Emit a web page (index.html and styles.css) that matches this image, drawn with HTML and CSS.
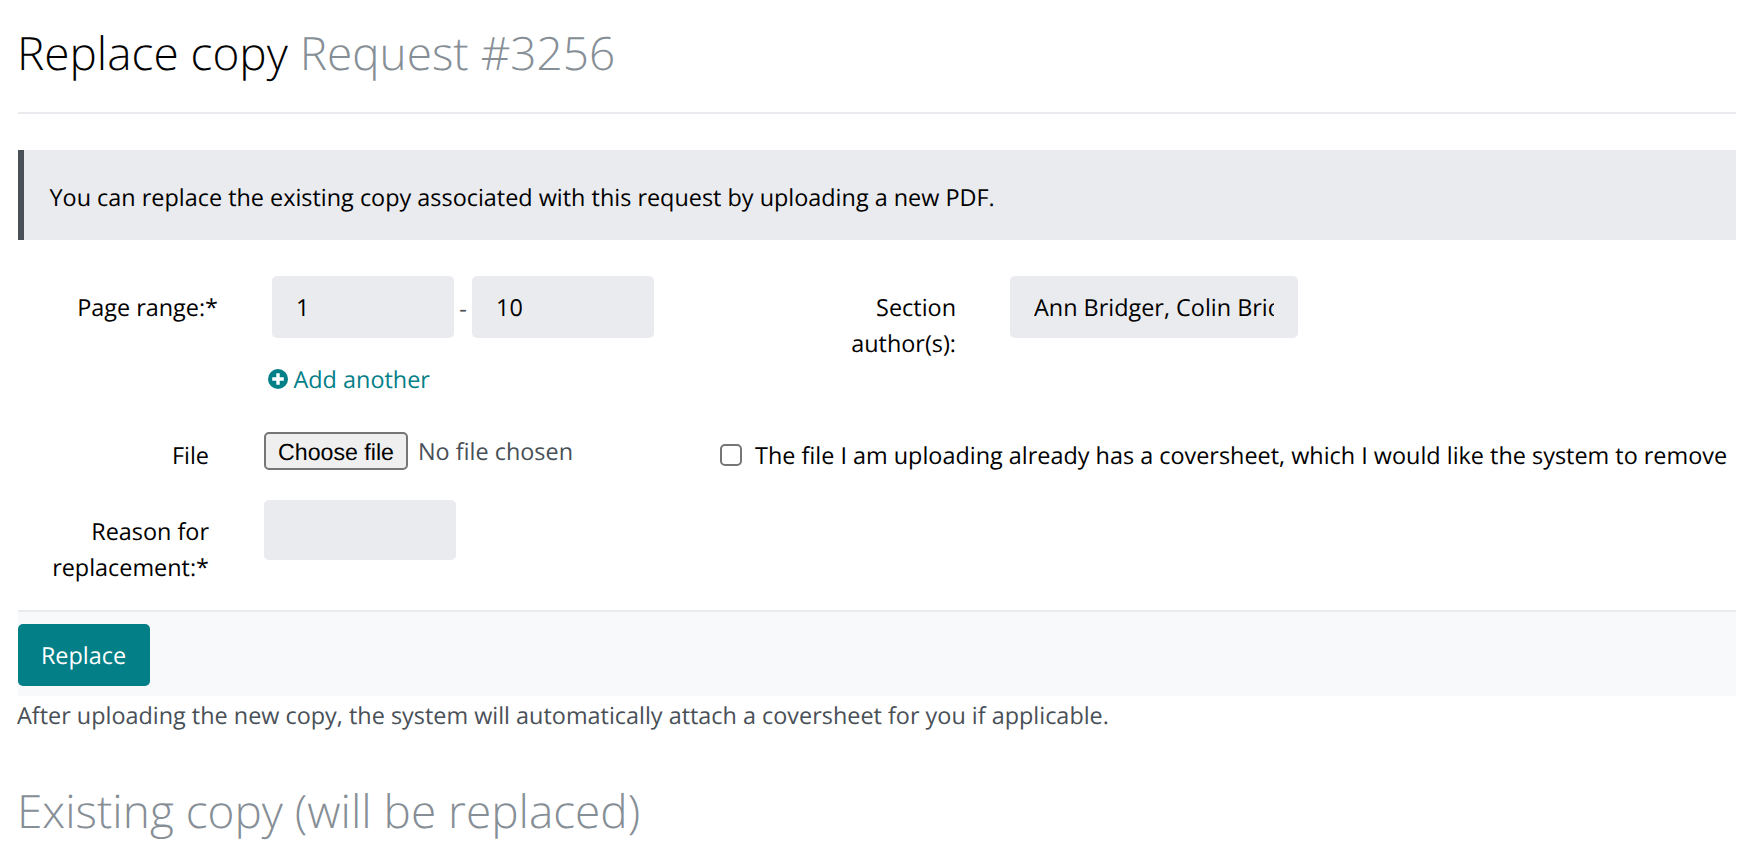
FILE: index.html
```
<!DOCTYPE html>
<html lang="en">
<head>
<meta charset="utf-8">
<title>Replace copy</title>
<link rel="stylesheet" href="styles.css">
</head>
<body>
<main class="page">
  <h1 class="title">Replace copy <small class="muted">Request #3256</small></h1>
  <p class="notice">You can replace the existing copy associated with this request by uploading a new PDF.</p>
  <form class="form">
    <div class="row row-details">
      <label class="label label-range" for="from">Page range:*</label>
      <div class="range">
        <div class="range-inputs">
          <input class="input input-page" id="from" type="text" value="1">
          <span class="dash">-</span>
          <input class="input input-page" type="text" value="10">
        </div>
        <a class="add">
          <svg class="add-icon" viewBox="0 0 20 20"><circle cx="10" cy="10" r="10" fill="currentColor"/><path d="M10 4.2v11.6M4.2 10h11.6" stroke="#fff" stroke-width="3.4"/></svg>
          <span>Add another</span>
        </a>
      </div>
      <label class="label label-authors" for="authors">Section author(s):</label>
      <input class="input input-authors" id="authors" type="text" value="Ann Bridger, Colin Bridger">
    </div>
    <div class="row row-file">
      <span class="label">File</span>
      <div class="file">
        <button class="choose" type="button">Choose file</button>
        <span class="file-name">No file chosen</span>
      </div>
      <label class="cover"><input class="checkbox" type="checkbox"><span>The file I am uploading already has a coversheet, which I would like the system to remove</span></label>
    </div>
    <div class="row row-reason">
      <label class="label" for="reason">Reason for replacement:*</label>
      <input class="input input-reason" id="reason" type="text">
    </div>
    <div class="actions"><button class="submit" type="button">Replace</button></div>
  </form>
  <p class="hint">After uploading the new copy, the system will automatically attach a coversheet for you if applicable.</p>
  <h2 class="subtitle">Existing copy (will be replaced)</h2>
</main>
</body>
</html>
```
FILE: styles.css
```
* { box-sizing: border-box; }
body {
  margin: 0;
  background: #fff;
  color: #495057;
  font: 23.42px/36px "Open Sans", sans-serif;
  text-rendering: geometricPrecision;
  overflow: hidden;
}
input, button { text-rendering: inherit; }
.page { width: 1736px; padding-left: 18px; }
.title, .subtitle { margin: 0; font-size: 45.95px; line-height: 58px; font-weight: 300; text-indent: -1px; }
.title { height: 114px; padding-top: 24px; border-bottom: 2px solid #eaebef; color: #000; }
.title small { font-size: inherit; }
.muted, .subtitle { color: #868e96; }
.notice {
  height: 90px;
  margin: 36px 0;
  padding: 29px 25.5px 24px;
  border-left: 6px solid #495057;
  background: #eaebef;
  color: #000;
}
.row { display: grid; align-items: start; }
.row-details { grid-template-columns: 200px 457px 173px 288px; column-gap: 54px; height: 156px; }
.row-file { grid-template-columns: 191px 401px auto; column-gap: 55px; height: 68px; }
.row-reason { grid-template-columns: 191px 192px; column-gap: 55px; height: 110px; }
.label { color: #000; text-align: right; }
.row-details .label { padding-top: 13px; }
.row-reason .label { padding: 13px 0 0 30px; }
.row-file .label { padding-top: 5px; }
.row-details .label-authors { padding-left: 60px; }
.input {
  height: 62px;
  min-width: 0;
  padding: 0 24px;
  border: 0;
  border-radius: 5px;
  background: #eaebef;
  color: #000;
  font: inherit;
}
.range-inputs { display: flex; }
.input-page { width: 182px; }
.dash { width: 18px; padding-top: 14px; text-align: center; }
.input-authors { width: 288px; }
.input-reason { width: 192px; height: 60px; }
.add { display: flex; align-items: center; gap: 6px; margin: 23px 0 0 -4.5px; color: #037f88; }
.add-icon { width: 20px; height: 20px; }
.file { display: flex; gap: 10px; }
.choose {
  width: 144px;
  height: 38px;
  padding: 2px 0 0;
  border: 2px solid #767676;
  border-radius: 5px;
  background: #efefef;
  color: #000;
  font: 23.2px/32px "Liberation Sans", Arial, sans-serif;
}
.file-name { padding-top: 1px; }
.cover { display: flex; align-items: flex-start; gap: 13px; padding-top: 5px; color: #000; white-space: nowrap; }
.checkbox {
  appearance: none;
  width: 22px;
  height: 22px;
  margin: 7px 0 0;
  border: 2px solid #767676;
  border-radius: 5px;
  background: #fff;
}
.actions { height: 86px; padding-top: 12px; border-top: 2px solid #eaebef; background: #f8f9fb; }
.submit {
  display: block;
  width: 132px;
  height: 62px;
  padding: 0 1px 0 0;
  border: 0;
  border-radius: 5px;
  background: #037f88;
  color: #fff;
  font: inherit;
}
.hint { margin: 1px 0 49px -1px; }
```
